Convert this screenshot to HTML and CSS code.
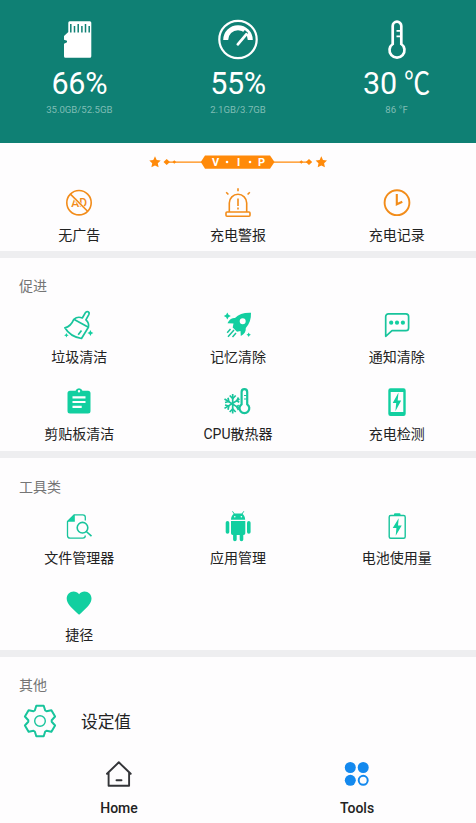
FILE: index.html
```html
<!DOCTYPE html>
<html lang="zh">
<head>
  <meta charset="UTF-8" />
  <meta name="viewport" content="width=device-width, initial-scale=1.0" />
  <title>Tools</title>
  <link rel="stylesheet" href="styles.css">
</head>
<body>
  <header class="stats">
    <div class="stat">
      <svg class="stat-icon" viewBox="0 0 40 40">
        <path fill="#fff" d="M11 1.300h19.800a1.500 1.500 0 0 1 1.500 1.500v33.500a1.500 1.500 0 0 1-1.500 1.500h-24.300a1.500 1.500 0 0 1-1.500-1.500V23.700l3-1.500v-1.500l-3-1V16l4.300-4V2.800A1.500 1.500 0 0 1 11 1.300z"/>
        <path stroke="#0f8074" stroke-width="1.500" d="M11.800 4v8.500M15.500 6v6.500M19.200 4v8.500M22.900 6v6.500M26.500 4v8.500M30.200 6v6.500"/>
      </svg>
      <div class="stat-value">66%</div>
      <div class="stat-detail">35.0GB/52.5GB</div>
    </div>
    <div class="stat">
      <svg class="stat-icon" viewBox="0 0 40 40">
        <circle cx="20" cy="19.500" r="18.700" fill="none" stroke="#fff" stroke-width="2.200"/>
        <path fill="none" stroke="#fff" stroke-width="5" d="M7.700 20a12.300 12.300 0 0 1 24.600 0"/>
        <path stroke="#0f8074" stroke-width="4.500" d="M22 19l6.500-7.500"/>
        <path stroke="#fff" stroke-width="2.700" stroke-linecap="round" d="M19.800 24.300l8.500-10"/>
      </svg>
      <div class="stat-value">55%</div>
      <div class="stat-detail">2.1GB/3.7GB</div>
    </div>
    <div class="stat">
      <svg class="stat-icon" viewBox="0 0 40 40">
        <path fill="none" stroke="#fff" stroke-width="2.700" d="M15.700 24V6a4.300 4.300 0 0 1 8.600 0v18a7.500 7.500 0 1 1-8.600 0z"/>
        <path stroke="#fff" stroke-width="1.700" d="M19.500 10.800h4M19.500 16.300h4"/>
      </svg>
      <div class="stat-value">30 <span class="degree">℃</span></div>
      <div class="stat-detail">86 ℉</div>
    </div>
  </header>

  <main>
    <section class="panel vip">
      <svg class="vip-banner" viewBox="0 0 180 16">
        <g fill="#ff8a0a">
          <path id="star" d="M7 2.300l1.700 3.700 4 .5-2.900 2.800.8 4L7 11.400l-3.600 1.900.8-4-2.900-2.800 4-.5z"/>
          <use href="#star" x="166.300"/>
          <path d="M15.500 8l3.200-3 3.200 3-3.200 3zM24.500 8l1.800-1.800L28.100 8l-1.800 1.800zM151.500 8l1.800-1.800 1.800 1.800-1.800 1.800zM157.800 8l3.200-3 3.200 3-3.200 3z"/>
          <path d="M18 7.500h144v1.200H18z"/>
          <path d="M57 1.500h65l4.500 6.500-4.500 6.800H57L52.800 8z"/>
        </g>
        <g class="vip-text">
          <text x="67.500" y="12">V</text>
          <text x="90.500" y="12">I</text>
          <text x="113.500" y="12">P</text>
        </g>
        <circle cx="79" cy="8" r="1.300" fill="#fff"/>
        <circle cx="102" cy="8" r="1.300" fill="#fff"/>
      </svg>
      <div class="grid">
        <div class="tool">
          <svg class="icon orange" viewBox="0 0 30 30">
            <text class="ad-text" x="15.200" y="18.800">AD</text>
            <path stroke="#fefdfe" stroke-width="2.600" d="M7 7l16 16"/>
            <circle cx="15" cy="14.700" r="12.200"/>
            <path d="M6.400 6.100l17.200 17.200"/>
          </svg>
          <span>无广告</span>
        </div>
        <div class="tool">
          <svg class="icon orange" viewBox="0 0 30 30">
            <path d="M6.300 24v-9a8.700 8.700 0 0 1 17.400 0v9M15 .3v3M3.200 4.200l2.200 2.300M26.800 4.200l-2.200 2.300M15 10.500v7.500M15 19.500v2"/>
            <rect x="3" y="24" width="24" height="4.200" rx="1"/>
          </svg>
          <span>充电警报</span>
        </div>
        <div class="tool">
          <svg class="icon orange" viewBox="0 0 30 30">
            <circle cx="15" cy="14.700" r="12.400" stroke-width="1.900"/>
            <path stroke-width="2.100" d="M14.800 6v10.300l5.500-2.500"/>
          </svg>
          <span>充电记录</span>
        </div>
      </div>
    </section>

    <section class="panel boost">
      <h2>促进</h2>
      <div class="grid">
        <div class="tool">
          <svg class="icon line" viewBox="0 0 30 30">
            <path d="M9.800 9.300C12.500 7 15.500 6.800 18.300 8l3-5.200c1.600-2.300 4.700-.8 3.500 1.800l-2.900 5.200c2.300 2 3.200 4.400 2.500 7.500L17.500 28.500C9.500 27.300 4 23 .9 17.800c4-.8 6.900-3.800 8.900-8.500zM9.800 9.300l14.600 8M17.500 20.500l-3.300 4.300"/>
            <path class="fill" d="M2.400 23l.7 1.600 1.600.7-1.600.7-.7 1.600-.7-1.600-1.600-.7 1.600-.7zM26.400 20l1 2 2 1-2 1-1 2-1-2-2-1 2-1z"/>
          </svg>
          <span>垃圾清洁</span>
        </div>
        <div class="tool">
          <svg class="icon" viewBox="0 0 30 30">
            <path class="fill" fill-rule="evenodd" d="M28 2.700c-7-.3-12.500 1.500-16 5.300-3.500-.5-6 1.700-7.500 5.300l6 .2-.8 4 4.300 4.300 3.500-.8.300 5c3.500-1.800 5.300-4.500 5-8C26.500 14 28.200 9 28 2.700zM19.700 8.300a3 3 0 1 1 0 6 3 3 0 0 1 0-6z"/>
            <path class="stroke" stroke-width="1.500" d="M7.500 19l-3.300 3.700M11 20l-6 6.800M13 23l-3.500 4"/>
            <path class="fill" d="M4.300 2.500l1.200 2.300 2.300 1.200-2.300 1.200-1.200 2.300-1.200-2.300L.8 6l2.300-1.200zM25.700 22.500l.8 1.400 1.400.8-1.400.8-.8 1.400-.8-1.400-1.400-.8 1.400-.8z"/>
          </svg>
          <span>记忆清除</span>
        </div>
        <div class="tool">
          <svg class="icon line" viewBox="0 0 30 30">
            <path d="M3.700 26.300V6.500a2.700 2.700 0 0 1 2.700-2.700h17.500a2.700 2.700 0 0 1 2.700 2.700V18a2.700 2.700 0 0 1-2.700 2.700H10z"/>
            <circle class="fill" cx="9.200" cy="12.700" r="2.100"/>
            <circle class="fill" cx="15" cy="12.700" r="2.100"/>
            <circle class="fill" cx="20.900" cy="12.700" r="2.100"/>
          </svg>
          <span>通知清除</span>
        </div>
        <div class="tool">
          <svg class="icon" viewBox="0 0 30 30">
            <path class="fill" fill-rule="evenodd" d="M6 3.700h5.500a3.700 3.700 0 0 1 7 0H24a2.500 2.500 0 0 1 2.500 2.500v17.700a2.500 2.500 0 0 1-2.500 2.500H6a2.500 2.500 0 0 1-2.500-2.500V6.200A2.500 2.500 0 0 1 6 3.700zm9-.7a1.200 1.200 0 1 0 0 2.400A1.200 1.200 0 0 0 15 3z"/>
            <path stroke="#fff" stroke-width="2.200" d="M8.500 10.300h13M8.500 15h13M8.500 19.800h9.200"/>
          </svg>
          <span>剪贴板清洁</span>
        </div>
        <div class="tool">
          <svg class="icon" viewBox="0 0 30 30">
            <g class="stroke" stroke-width="1.700">
              <path d="M9.700 7v19.400M1.500 12l15 9.400M1.500 21.400l15-9.400"/>
              <path d="M6.700 8.500l3 3 3-3M6.700 25l3-3 3 3M2 15.500l3.800-1-.8-3.700M2 18l3.800 1-.8 3.700M15.500 10.500l-1.700 3.300 2.500 1.400M15.500 23l-1.700-3.300 2-1.400"/>
              <path stroke-width="2.200" d="M18.600 17.300V5a2.800 2.800 0 0 1 5.600 0v12.300a4.900 4.900 0 1 1-5.600 0z"/>
              <path stroke-width="1.200" d="M21 8.500h2.500M21 12h2.500"/>
            </g>
          </svg>
          <span>CPU散热器</span>
        </div>
        <div class="tool">
          <svg class="icon" viewBox="0 0 30 30">
            <path class="fill" fill-rule="evenodd" d="M8.500 1.300h13a2.200 2.200 0 0 1 2.200 2.200v23.300a2.200 2.200 0 0 1-2.200 2.200h-13a2.200 2.200 0 0 1-2.200-2.200V3.500a2.200 2.200 0 0 1 2.200-2.200zM8.700 5v20h12.600V5z"/>
            <path class="fill" d="M16.500 5.500L10.700 16h3.500l-.8 8.200 5.800-10.700h-3.500z"/>
          </svg>
          <span>充电检测</span>
        </div>
      </div>
    </section>

    <section class="panel utils">
      <h2>工具类</h2>
      <div class="grid">
        <div class="tool">
          <svg class="icon line" viewBox="0 0 30 30">
            <path stroke-width="1.300" d="M21.300 9.500V6.300a2.500 2.500 0 0 0-2.500-2.500H10.300L3.500 10.500v14a2.700 2.700 0 0 0 2.700 2.700h12.500c1.700 0 2.600-1 2.600-2.600"/>
            <path class="fill" d="M10.800 3.500v7.300H3.300z"/>
            <circle cx="18.500" cy="16.700" r="5.300" stroke-width="1.600"/>
            <path stroke-width="1.600" d="M22.300 20.500l5.200 4.700"/>
          </svg>
          <span>文件管理器</span>
        </div>
        <div class="tool">
          <svg class="icon" viewBox="0 0 30 30">
            <path class="fill" fill-rule="evenodd" d="M8 8.800c0-3 1.300-5 3.400-6.200h7.400c2.100 1.200 3.400 3.200 3.400 6.200zM11.800 5a.8.8 0 1 0 0 1.600.8.800 0 0 0 0-1.600zm6.600 0a.8.800 0 1 0 0 1.600.8.800 0 0 0 0-1.600z"/>
            <path class="stroke" stroke-width="1" d="M9.500.3l2 3M20.800.3l-2 3"/>
            <path class="fill" d="M8 10h14.300v12.300a1.800 1.800 0 0 1-1.800 1.800h-.2v4.300a1.800 1.800 0 0 1-3.600 0v-4.300h-3v4.300a1.800 1.800 0 0 1-3.600 0v-4.300h-.3A1.800 1.800 0 0 1 8 22.300z"/>
            <rect class="fill" x="2.700" y="10" width="3.600" height="12.700" rx="1.800"/>
            <rect class="fill" x="24" y="10" width="3.600" height="12.700" rx="1.800"/>
          </svg>
          <span>应用管理</span>
        </div>
        <div class="tool">
          <svg class="icon line" viewBox="0 0 30 30">
            <rect x="7.200" y="4.500" width="16" height="22.700" rx="1.500" stroke-width="1.400"/>
            <path class="fill" d="M12 4.500V3.300a1 1 0 0 1 1-1h4.500a1 1 0 0 1 1 1v1.200zM16.700 7.300l-6 9.700h3.700l-.7 7.700 6-10.200h-3.700z"/>
          </svg>
          <span>电池使用量</span>
        </div>
        <div class="tool">
          <svg class="icon" viewBox="0 0 30 30">
            <path class="fill" d="M15.100 26.800l-1.800-1.600C6.900 19.400 2.700 15.600 2.700 10.600c0-4.100 3.100-7.100 6.900-7.100 2.200 0 4.200 1 5.500 2.700 1.300-1.700 3.300-2.700 5.500-2.700 3.800 0 6.900 3 6.900 7.100 0 5-4.200 8.800-10.600 14.600z"/>
          </svg>
          <span>捷径</span>
        </div>
      </div>
    </section>

    <section class="panel others">
      <h2>其他</h2>
      <div class="setting">
        <svg class="setting-icon" viewBox="-17 -17 34 34">
          <path d="M-5.200-10.500L-3.700-15.300H3.700L5.200-10.500 6.500-9.750 11.400-10.850 15.100-4.450 11.700-.75V.75L15.100 4.450 11.400 10.850 6.500 9.750 5.200 10.500 3.700 15.300H-3.700L-5.200 10.500-6.500 9.750-11.400 10.850-15.100 4.450-11.700.75V-.75L-15.100-4.450-11.400-10.850-6.500-9.750z"/>
          <circle r="5.300" stroke-width="1.400"/>
        </svg>
        <span>设定值</span>
      </div>
    </section>
  </main>

  <nav class="tabs">
    <div class="tab">
      <svg class="tab-icon" viewBox="0 0 30 30">
        <path fill="none" stroke="#333438" stroke-width="1.900" stroke-linejoin="round" stroke-linecap="round" d="M3 14.800L14.800 3.300l11.900 11.500M4.600 13.500V26.800h20.500V13.500M12.500 21.300h5"/>
      </svg>
      <span>Home</span>
    </div>
    <div class="tab">
      <svg class="tab-icon" viewBox="0 0 30 30">
        <circle cx="8.300" cy="8.500" r="5.500" fill="#1489ee"/>
        <circle cx="21.200" cy="8.500" r="5.500" fill="#1489ee"/>
        <circle cx="8.300" cy="21.300" r="5.500" fill="#1489ee"/>
        <circle cx="21.200" cy="21.300" r="4.500" fill="none" stroke="#1489ee" stroke-width="2"/>
      </svg>
      <span>Tools</span>
    </div>
  </nav>
</body>
</html>
```

FILE: styles.css
```css
* {
  box-sizing: border-box;
}
body {
  margin: 0;
  height: 823px;
  display: flex;
  flex-direction: column;
  overflow: hidden;
  background: #fefdfe;
  color: #222;
  font-family: Roboto, "Noto Sans CJK SC", sans-serif;
}
svg {
  display: block;
  overflow: visible;
}

/* Device stats */
.stats {
  height: 143px;
  padding-top: 20px;
  display: grid;
  grid-template-columns: repeat(3, 1fr);
  background: #0f8074;
  color: #fff;
}
.stat {
  display: flex;
  flex-direction: column;
  align-items: center;
}
.stat-icon {
  width: 40px;
  height: 40px;
}
.stat-value {
  height: 36px;
  margin-top: 6px;
  font-size: 30.5px;
  line-height: 36px;
  letter-spacing: -0.3px;
}
/* the fallback glyph is wider than the digits beside it */
.degree {
  display: inline-block;
  height: 36px;
  margin: 0 -2px;
  transform: scaleX(0.86);
}
.stat-detail {
  margin-top: 2px;
  font-size: 9.6px;
  line-height: 12px;
  color: #7fbdb5;
}

/* Tool panels */
.panel {
  border-bottom: 7px solid #eeeef0;
}
.vip {
  padding: 11px 0 6px;
}
.boost {
  padding: 18px 0 7px;
}
.utils {
  padding: 19px 0 5px;
}
.others {
  padding-top: 18px;
  border-bottom: 0;
}
.panel h2 {
  margin: 0 0 14px 19px;
  font-size: 14px;
  font-weight: 400;
  line-height: 20px;
  color: #757575;
}
.vip-banner {
  width: 180px;
  height: 16px;
  margin: 0 auto 18px;
}
.vip-text {
  fill: #fff;
  font-size: 11px;
  font-weight: 700;
  text-anchor: middle;
}
.grid {
  display: grid;
  grid-template-columns: repeat(3, 1fr);
  row-gap: 20px;
}
.tool {
  display: flex;
  flex-direction: column;
  align-items: center;
  gap: 7px;
  font-size: 14px;
  line-height: 20px;
}
.icon {
  width: 30px;
  height: 30px;
  fill: none;
}
.icon .fill {
  fill: #12cfa0;
  stroke: none;
}
.icon .stroke,
.line {
  stroke: #18c49c;
}
.line {
  stroke-width: 1.7;
  stroke-linejoin: round;
}
.orange {
  stroke: #f28c1a;
  stroke-width: 1.6;
}
.ad-text {
  fill: #f28c1a;
  stroke: none;
  font-size: 12px;
  font-weight: 500;
  text-anchor: middle;
}

/* Settings row */
.panel.others h2 {
  margin-bottom: 9px;
}
.setting {
  display: flex;
  align-items: center;
  gap: 24px;
  padding-left: 23px;
  font-size: 16.7px;
}
.setting-icon {
  width: 34px;
  height: 34px;
  fill: none;
  stroke: #18c49c;
  stroke-width: 2;
  stroke-linejoin: round;
}

/* Bottom tabs */
.tabs {
  margin-top: auto;
  height: 64px;
  display: grid;
  grid-template-columns: repeat(2, 1fr);
}
.tab {
  display: flex;
  flex-direction: column;
  align-items: center;
  gap: 9px;
  font-size: 14px;
  font-weight: 500;
  line-height: 20px;
}
.tab-icon {
  width: 30px;
  height: 30px;
}
```
